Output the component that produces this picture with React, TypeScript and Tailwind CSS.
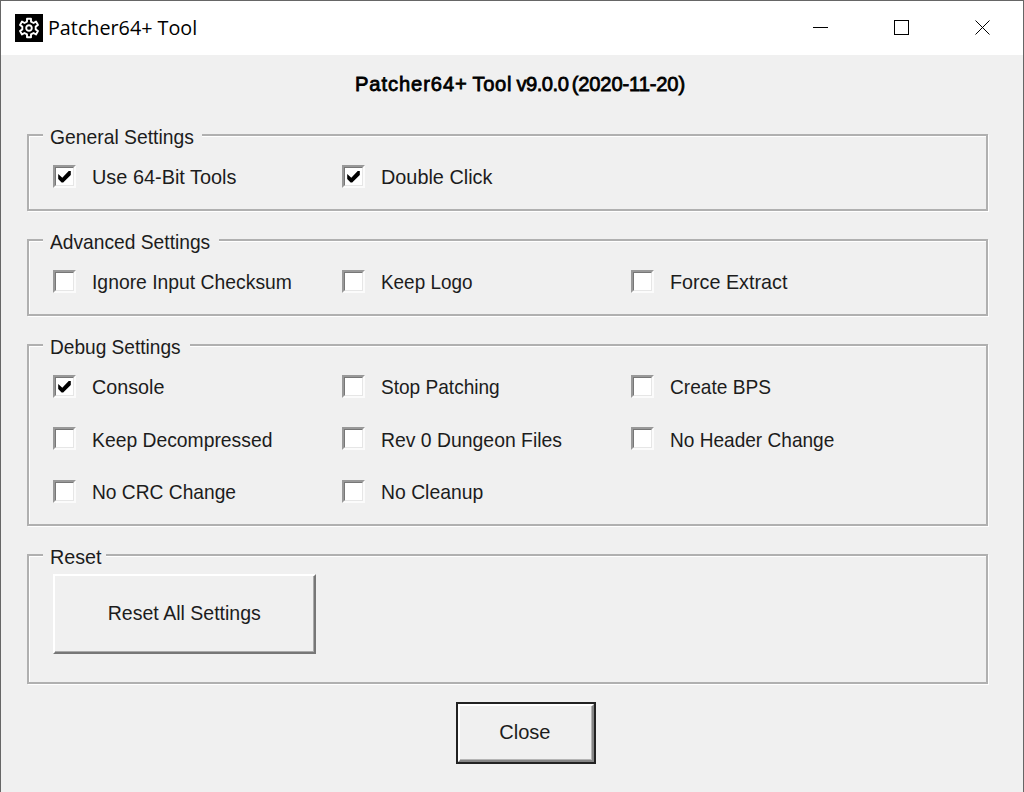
import type { ReactNode } from "react";

type Option = { label: string; fit: string; checked?: boolean };

const general: Option[] = [
  { label: "Use 64-Bit Tools", fit: "scale-x-[0.947]", checked: true },
  { label: "Double Click", fit: "scale-x-[0.945]", checked: true },
];
const advanced: Option[] = [
  { label: "Ignore Input Checksum", fit: "scale-x-[0.921]" },
  { label: "Keep Logo", fit: "scale-x-[0.9]" },
  { label: "Force Extract", fit: "scale-x-[0.94]" },
];
const debug: Option[] = [
  { label: "Console", fit: "scale-x-[0.94]", checked: true },
  { label: "Stop Patching", fit: "scale-x-[0.908]" },
  { label: "Create BPS", fit: "scale-x-[0.91]" },
  { label: "Keep Decompressed", fit: "scale-x-[0.92]" },
  { label: "Rev 0 Dungeon Files", fit: "scale-x-[0.923]" },
  { label: "No Header Change", fit: "scale-x-[0.908]" },
  { label: "No CRC Change", fit: "scale-x-[0.914]" },
  { label: "No Cleanup", fit: "scale-x-[0.922]" },
];

function CheckOption({ label, fit, checked }: Option) {
  return (
    <label className="flex h-[52.5px] items-center">
      <span className="-mt-[2px] flex size-[23px] shrink-0 border-2 border-t-[#999] border-l-[#999] border-r-[#fbfbfb] border-b-[#fbfbfb]">
        <span className="flex flex-1 border border-t-[#777] border-l-[#777] border-r-[#e6e6e6] border-b-[#e6e6e6] bg-white">
          {checked && (
            <svg width="17" height="17" viewBox="0 0 17 17">
              <path d="M2.2 6 L6.3 9.7 L12.7 3 H14.8 V7 L7.2 14.5 H5.6 L2.2 11Z" fill="#000" />
            </svg>
          )}
        </span>
      </span>
      <span className={`ml-4 origin-left whitespace-nowrap ${fit}`}>{label}</span>
    </label>
  );
}

function Group({ title, fit, legendWidth, height, children }: { title: string; fit: string; legendWidth: string; height: string; children: ReactNode }) {
  return (
    <section className={`grid w-[961px] ${height}`}>
      <div className="col-start-1 row-start-1 border-2 border-[#b0b0b0] shadow-[1px_1px_0_#fff,inset_1px_1px_0_#fff]" />
      <div className="z-10 col-start-1 row-start-1 flex flex-col pl-[26px]">
        <h2 className={`-mt-[11px] -ml-[10px] h-6 bg-[#f0f0f0] pl-[7px] leading-7 ${legendWidth}`}>
          <span className={`inline-block origin-left whitespace-nowrap ${fit}`}>{title}</span>
        </h2>
        {children}
      </div>
    </section>
  );
}

function Options({ items }: { items: Option[] }) {
  return (
    <div className="mt-[4px] grid grid-cols-[289px_289px_289px]">
      {items.map((item) => (
        <CheckOption key={item.label} {...item} />
      ))}
    </div>
  );
}

export default function App() {
  return (
    <main className="flex h-[792px] w-[1024px] flex-col overflow-hidden border-x border-t border-[#666] bg-[#f0f0f0] font-['Liberation_Sans',sans-serif] text-[21px] leading-7 text-[#1c1c1c]">
      <header className="flex h-[54px] shrink-0 items-center bg-white pl-[14px] text-black">
        <svg className="-mt-px" width="28" height="28" viewBox="0 0 28 28">
          <rect width="28" height="28" fill="#000" />
          <g transform="translate(14 14)" fill="none" stroke="#fff" strokeWidth="1.9" strokeLinejoin="round">
            <path d="M-2 -9.2H2V-6.4L4.5 -5L7 -6.4L9 -3L6.7 -1.4V1.4L9 3L7 6.4L4.500 5L2 6.400V9.200H-2V6.400L-4.500 5L-7 6.400L-9 3L-6.700 1.400V-1.400L-9 -3L-7 -6.400L-4.500 -5L-2 -6.400Z" />
            <circle r="2.8" />
          </g>
        </svg>
        <span className="ml-[5px] w-[152px] origin-left scale-x-[0.987] whitespace-nowrap font-['Open_Sans',sans-serif] text-[20px]">Patcher64+ Tool</span>
        <svg className="ml-[612px]" width="180" height="18" viewBox="0 0 180 18" fill="none" stroke="#000" shapeRendering="crispEdges">
          <path d="M1 8.5h15M82.5 1.5h14v14h-14Z" />
          <path d="M163.5 1.5l14 14M177.5 1.5l-14 14" shapeRendering="auto" />
        </svg>
      </header>
      <h1 className="ml-[354px] mt-[15px] w-fit origin-left scale-x-[0.96] whitespace-nowrap text-black [-webkit-text-stroke:0.8px_#000] [word-spacing:-2px]">
        <span className="tracking-[0.95px]">Patcher64+ </span>
        <span className="tracking-[0.7px]">Tool </span>
        <span className="tracking-[-0.5px]">v9.0.0 </span>
        <span className="tracking-[-0.15px]">(2020-11-20)</span>
      </h1>
      <div className="ml-[26px] mt-[36px] flex flex-col gap-[28px]">
        <Group title="General Settings" fit="scale-x-[0.92]" legendWidth="w-[159px]" height="h-[77px]">
          <Options items={general} />
        </Group>
        <Group title="Advanced Settings" fit="scale-x-[0.915]" legendWidth="w-[176px]" height="h-[77px]">
          <Options items={advanced} />
        </Group>
        <Group title="Debug Settings" fit="scale-x-[0.91]" legendWidth="w-[147px]" height="h-[182px]">
          <Options items={debug} />
        </Group>
        <Group title="Reset" fit="scale-x-[0.94]" legendWidth="w-[63px]" height="h-[130px]">
          <button className="mt-[7px] flex h-[80px] w-[263px] items-center justify-center border-2 border-t-white border-l-white border-r-[#777] border-b-[#777] pb-[2px] shadow-[inset_-1px_-1px_0_#aaa]">
            <span className="inline-block scale-x-[0.93]">Reset All Settings</span>
          </button>
        </Group>
      </div>
      <button className="ml-[455px] mt-[18px] flex h-[62px] w-[140px] shrink-0 border-2 border-[#222]">
        <span className="flex h-full flex-1 items-center justify-center border-2 border-t-white border-l-white border-r-[#858585] border-b-[#858585] pr-[2px] pb-[2px] shadow-[inset_-1px_-1px_0_#b5b5b5]">
          <span className="inline-block scale-x-[0.955]">Close</span>
        </span>
      </button>
    </main>
  );
}
